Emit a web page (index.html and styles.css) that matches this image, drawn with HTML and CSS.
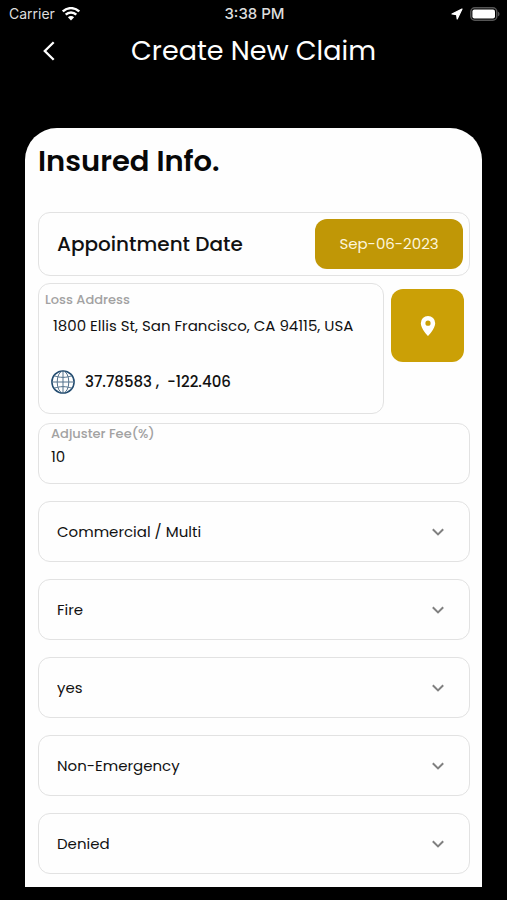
FILE: index.html
```html
<!DOCTYPE html>
<html lang="en">
<head>
<meta charset="utf-8">
<meta name="viewport" content="width=device-width, initial-scale=1">
<title>Create New Claim</title>
<link rel="stylesheet" href="styles.css">
</head>
<body>
<div class="status-bar">
  <div class="status-left">
    <span>Carrier</span>
    <svg class="wifi" viewBox="0 0 18 14" aria-hidden="true">
      <path d="M.8 4.500a11.600 11.600 0 0 1 16.400 0M3.700 7.700a7.500 7.500 0 0 1 10.600 0" fill="none" stroke="#fff" stroke-width="2.400"/>
      <path d="M5.900 10.200a4.400 4.400 0 0 1 6.200 0L9 13.500z" fill="#fff"/>
    </svg>
  </div>
  <time class="clock">3:38 PM</time>
  <div class="status-right">
    <svg class="location" viewBox="0 0 12 12" aria-hidden="true"><path d="M11 1 1 6l4.600.600L6.200 11z" fill="#fff" stroke="#fff" stroke-width="1.200" stroke-linejoin="round"/></svg>
    <svg class="battery" viewBox="0 0 30 14" aria-hidden="true">
      <rect x=".8" y=".8" width="26" height="12.400" rx="4" fill="none" stroke="#555" stroke-width="1.500"/>
      <rect x="2.400" y="2.400" width="22.600" height="9.200" rx="2" fill="#fff"/>
      <path d="M28 4.700c2 .7 2 3.900 0 4.600z" fill="#555"/>
    </svg>
  </div>
</div>
<header class="title-bar">
  <button class="back" type="button" aria-label="Back">
    <svg viewBox="0 0 12 20" aria-hidden="true"><path d="M10.700 1.200 1.800 10l8.900 8.800" fill="none" stroke="#fff" stroke-width="2.300"/></svg>
  </button>
  <h1>Create New Claim</h1>
</header>
<main class="card">
  <h2>Insured Info.</h2>
  <form class="claim-form">
    <div class="box appointment">
      <label for="date">Appointment Date</label>
      <button id="date" class="gold date" type="button">Sep-06-2023</button>
    </div>
    <div class="address-row">
      <div class="box address">
        <label for="address">Loss Address</label>
        <input id="address" type="text" value="1800 Ellis St, San Francisco, CA 94115, USA">
        <div class="coordinates">
          <svg viewBox="0 0 24 24" fill="none" stroke="#54728c" aria-hidden="true">
            <circle cx="12" cy="12" r="11.100" stroke="#234c70" stroke-width="1.500"/>
            <ellipse cx="12" cy="12" rx="5.800" ry="11"/>
            <path d="M12 1v22M1 12h22M3.200 5.700c5 2.200 12.600 2.200 17.600 0M3.200 18.300c5-2.200 12.600-2.200 17.600 0"/>
          </svg>
          <span>37.78583 ,&nbsp; -122.406</span>
        </div>
      </div>
      <button class="gold pin" type="button" aria-label="Choose location on map">
        <svg viewBox="0 0 16 20" aria-hidden="true"><path d="M8 0a7.200 7.200 0 0 0-7.200 7.200C.8 12.500 8 20 8 20s7.200-7.500 7.200-12.800A7.200 7.200 0 0 0 8 0zm0 4.600a2.600 2.600 0 1 1 0 5.200 2.600 2.600 0 0 1 0-5.200z" fill="#fff" fill-rule="evenodd"/></svg>
      </button>
    </div>
    <div class="box fee">
      <label for="fee">Adjuster Fee(%)</label>
      <input id="fee" type="text" inputmode="numeric" value="10">
    </div>
    <div class="selects">
      <div class="box select">
        <select aria-label="Property type"><option>Commercial / Multi</option></select>
        <svg viewBox="0 0 12 8" aria-hidden="true"><path d="m.800 1.200 5.200 5.200 5.200-5.200"/></svg>
      </div>
      <div class="box select">
        <select aria-label="Cause of loss"><option>Fire</option></select>
        <svg viewBox="0 0 12 8" aria-hidden="true"><path d="m.800 1.200 5.200 5.200 5.200-5.200"/></svg>
      </div>
      <div class="box select">
        <select aria-label="Confirmation"><option>yes</option><option>no</option></select>
        <svg viewBox="0 0 12 8" aria-hidden="true"><path d="m.800 1.200 5.200 5.200 5.200-5.200"/></svg>
      </div>
      <div class="box select">
        <select aria-label="Urgency"><option>Non-Emergency</option></select>
        <svg viewBox="0 0 12 8" aria-hidden="true"><path d="m.800 1.200 5.200 5.200 5.200-5.200"/></svg>
      </div>
      <div class="box select">
        <select aria-label="Claim status"><option>Denied</option></select>
        <svg viewBox="0 0 12 8" aria-hidden="true"><path d="m.800 1.200 5.200 5.200 5.200-5.200"/></svg>
      </div>
    </div>
  </form>
</main>
</body>
</html>
```
FILE: styles.css
```css
* {
  box-sizing: border-box;
}

body {
  margin: 0;
  background: #000;
  color: #111;
  font-family: Poppins, Inter, sans-serif;
  font-size: 15px;
  line-height: 20px;
}

svg {
  display: block;
}

button,
input,
select {
  margin: 0;
  padding: 0;
  border: 0;
  background: none;
  color: inherit;
  font: inherit;
}

.status-bar {
  display: grid;
  grid-template-columns: 1fr auto 1fr;
  align-items: center;
  height: 27px;
  padding: 0 7px 0 9px;
  color: #ddd;
  font-family: Inter, sans-serif;
  font-size: 14px;
}

.status-left,
.status-right {
  display: flex;
  align-items: center;
  gap: 7px;
}

.status-right {
  justify-content: flex-end;
}

.clock {
  font-size: 15px;
  font-weight: 500;
}

.wifi {
  width: 18px;
  height: 14px;
}

.location {
  width: 12px;
  height: 12px;
}

.battery {
  width: 30px;
  height: 14px;
}

.title-bar {
  display: grid;
  grid-template-columns: 56px 1fr 56px;
  align-items: center;
  height: 48px;
  padding: 0 25px;
  color: #fff;
}

.back {
  display: grid;
  place-items: center;
  width: 48px;
  height: 48px;
}

.back svg {
  width: 12px;
  height: 20px;
}

h1 {
  margin: 0;
  font-size: 27px;
  font-weight: 400;
  line-height: 36px;
  text-align: center;
}

.card {
  margin: 53px 25px 13px;
  padding: 11px 12px 13px 13px;
  border-radius: 32px 32px 0 0;
  background: #fefefe;
}

h2 {
  margin: 0 0 29px;
  color: #080808;
  font-size: 29px;
  font-weight: 600;
  line-height: 44px;
}

.box {
  border: 1px solid #e2e2e2;
  border-radius: 12px;
}

.appointment {
  display: flex;
  align-items: center;
  justify-content: space-between;
  height: 64px;
  padding: 0 6px 0 18px;
  font-size: 20px;
  font-weight: 500;
}

.gold {
  border-radius: 12px;
  background: #cba006;
  color: #fff;
}

.date {
  width: 148px;
  height: 50px;
  background: #c09706;
  color: #fdf5dc;
  font-size: 15px;
  font-weight: 400;
}

.address-row {
  display: flex;
  gap: 7px;
  margin-top: 7px;
  padding-right: 6px;
}

.address {
  display: flex;
  flex: 1;
  flex-direction: column;
  min-width: 0;
  height: 131px;
  padding: 6px;
}

.address label,
.fee label {
  color: #a2a2a2;
  font-size: 13px;
  font-weight: 500;
}

.address input {
  width: 100%;
  margin-top: 6px;
  padding-left: 8px;
}

.coordinates {
  display: flex;
  align-items: center;
  gap: 10px;
  margin-top: 34px;
  padding-left: 6px;
  font-weight: 500;
}

.coordinates svg {
  width: 24px;
  height: 24px;
}

.pin {
  display: grid;
  place-items: center;
  width: 73px;
  height: 73px;
  margin-top: 6px;
}

.pin svg {
  width: 16px;
  height: 20px;
}

.fee {
  display: flex;
  flex-direction: column;
  gap: 3px;
  height: 61px;
  margin-top: 9px;
  padding: 0 12px;
}

.selects {
  display: grid;
  gap: 17px;
  margin-top: 17px;
}

.select {
  display: grid;
  align-items: center;
  height: 61px;
}

.select select,
.select svg {
  grid-area: 1 / 1;
}

.select select {
  width: 100%;
  height: 100%;
  padding: 0 18px;
  border-radius: 12px;
  appearance: none;
}

.select svg {
  justify-self: end;
  width: 12px;
  height: 8px;
  margin-right: 25px;
  fill: none;
  stroke: #808080;
  stroke-width: 2;
  pointer-events: none;
}
```
